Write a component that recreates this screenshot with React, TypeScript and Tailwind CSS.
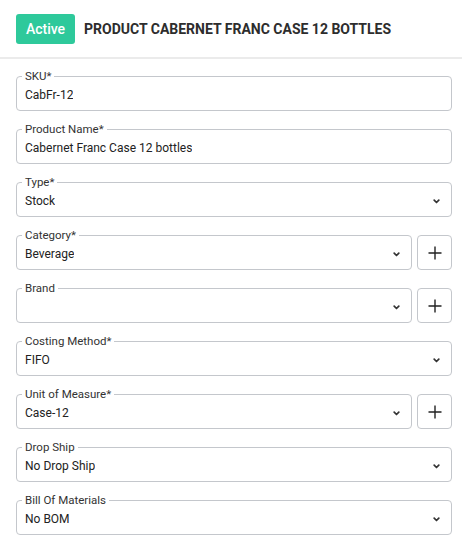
import { ReactNode } from 'react';

interface FieldProps {
  label: string;
  value?: string;
  select?: boolean;
  addButton?: boolean;
}

function Chevron() {
  return (
    <svg width="7" height="5" viewBox="0 0 7 5" className="shrink-0 text-[#333]">
      <path d="M1.2 1.2l2.3 2.3 2.3-2.3" fill="none" stroke="currentColor" strokeWidth="1.7" strokeLinecap="round" strokeLinejoin="round" />
    </svg>
  );
}

function PlusButton() {
  return (
    <button className="w-[35px] h-[35px] shrink-0 border border-[#c4c7cc] rounded-[4px] bg-white flex items-center justify-center text-[#222]">
      <svg width="14" height="14" viewBox="0 0 14 14">
        <path d="M7 0.5v13M0.5 7h13" stroke="currentColor" strokeWidth="1.4" />
      </svg>
    </button>
  );
}

function Field({ label, value = '', select, addButton }: FieldProps) {
  const box: ReactNode = (
    <fieldset className="flex-1 min-w-0 m-0 border border-[#c4c7cc] rounded-[4px] pl-[8px] pr-[11px] pt-0 pb-[6px]">
      <legend className="text-[11.5px] leading-[14px] text-[#333] px-[3px] -ml-[3px]">{label}</legend>
      <div className="flex items-center justify-between h-[18px] mt-[3px]">
        <span className="text-[12px] leading-[18px] text-[#222] truncate">{value}</span>
        {select && <Chevron />}
      </div>
    </fieldset>
  );

  if (!addButton) return box;

  return (
    <div className="flex items-end gap-[5px]">
      {box}
      <PlusButton />
    </div>
  );
}

export default function App() {
  return (
    <div className="w-[462px] h-[547px] bg-white overflow-hidden" style={{ fontFamily: 'Roboto, "Noto Sans", sans-serif' }}>
      <div className="flex items-center gap-[9px] pl-[16px] pt-[14px] pb-[13px] border-b-2 border-[#ebebeb]">
        <div className="w-[59px] h-[30px] rounded-[3px] bg-[#2ec99b] flex items-center justify-center text-white text-[14px] font-medium">
          Active
        </div>
        <h1 className="text-[14px] font-bold text-[#2d2d2d]">
          PRODUCT CABERNET FRANC CASE 12 BOTTLES
        </h1>
      </div>

      <div className="flex flex-col gap-[11px] pl-[16px] pr-[10px] pt-[10px]">
        <Field label="SKU*" value="CabFr-12" />
        <Field label="Product Name*" value="Cabernet Franc Case 12 bottles" />
        <Field label="Type*" value="Stock" select />
        <Field label="Category*" value="Beverage" select addButton />
        <Field label="Brand" select addButton />
        <Field label="Costing Method*" value="FIFO" select />
        <Field label="Unit of Measure*" value="Case-12" select addButton />
        <Field label="Drop Ship" value="No Drop Ship" select />
        <Field label="Bill Of Materials" value="No BOM" select />
      </div>
    </div>
  );
}
